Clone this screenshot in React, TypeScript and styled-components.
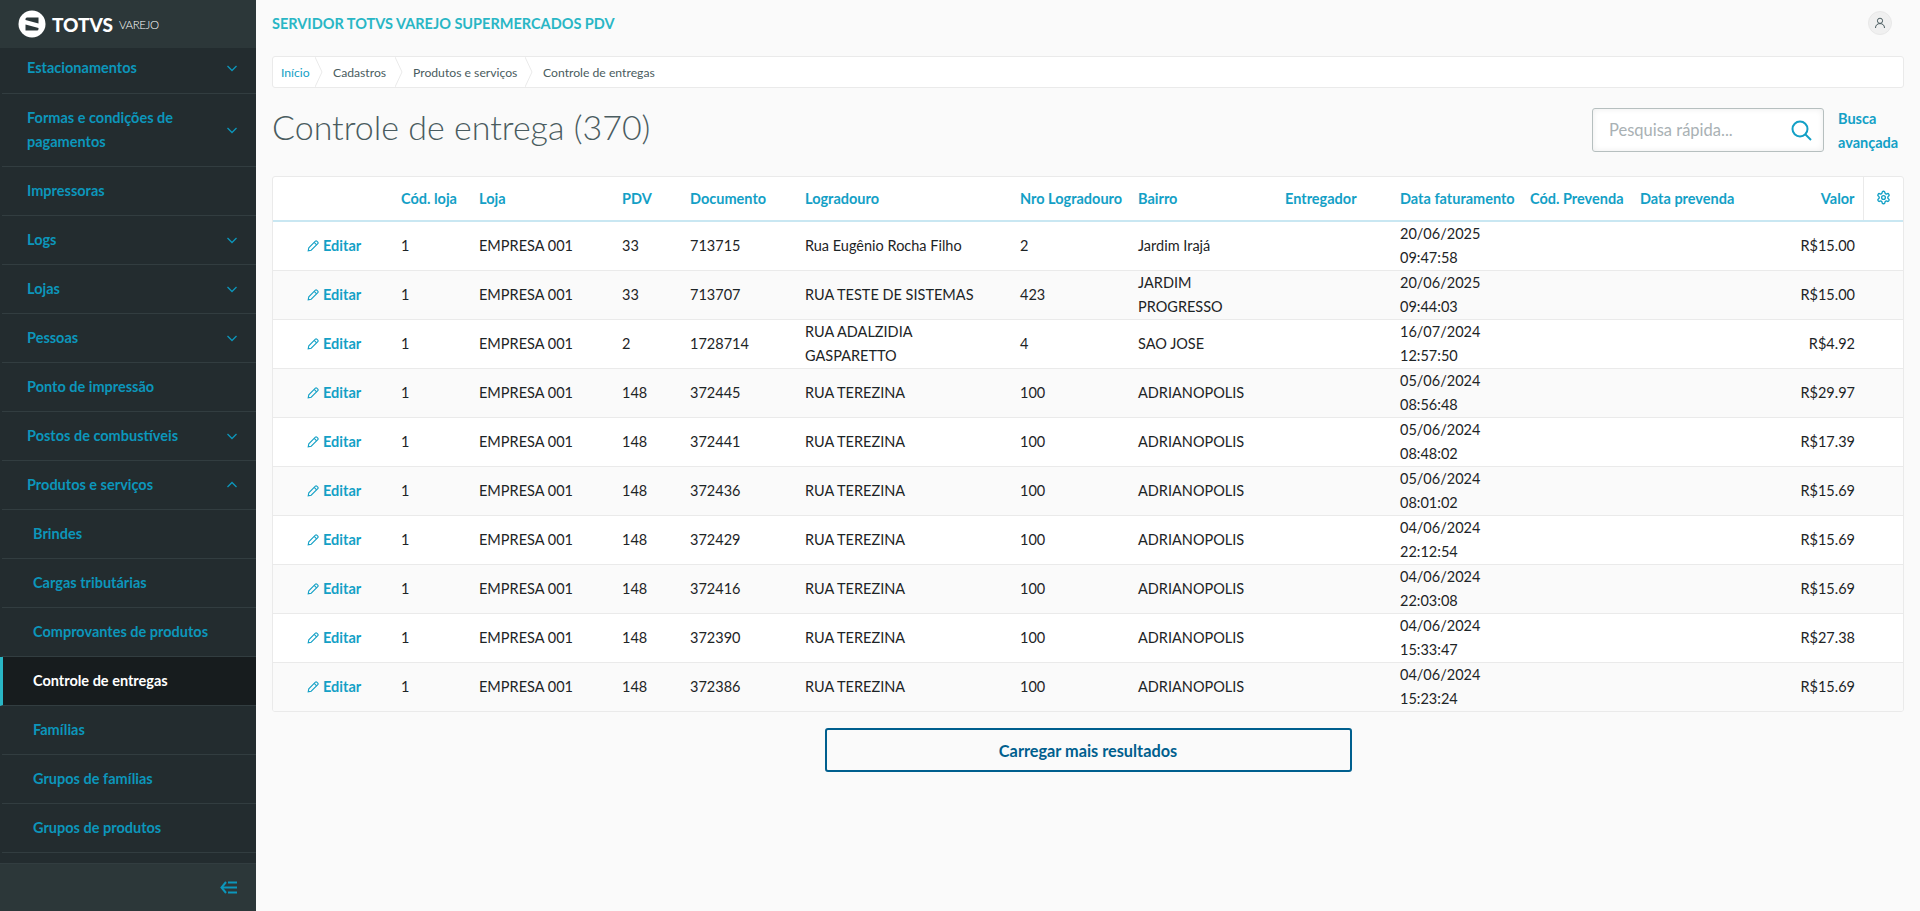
import React from 'react';
import styled, { createGlobalStyle } from 'styled-components';

const FONT = '"Lato", "Open Sans", sans-serif';
const SIDE_LINK = '#0c96bb';
const LINK = '#13a0c6';

const Global = createGlobalStyle`
  html, body { margin: 0; padding: 0; height: 100%; background: #fafafa; font-family: ${FONT}; }
  * { box-sizing: border-box; }
`;

const Shell = styled.div`
  display: flex;
  width: 1920px;
  height: 911px;
  overflow: hidden;
  background: #fafafa;
`;

const Sidebar = styled.aside`
  width: 256px;
  flex: none;
  display: flex;
  flex-direction: column;
  background: #232c2f;
`;

const Brand = styled.div`
  height: 48px;
  flex: none;
  background: #2c3739;
  display: flex;
  align-items: center;
  padding-left: 18px;
  color: #fff;
`;

const BrandName = styled.span`
  margin-left: 6px;
  font-size: 19px;
  font-weight: 900;
  letter-spacing: 0;
`;

const BrandSub = styled.span`
  margin-left: 6px;
  font-size: 11.5px;
  font-weight: 300;
  letter-spacing: -0.4px;
`;

const Nav = styled.nav`
  flex: 1;
  overflow: hidden;
`;

const NavItem = styled.div<{ $h?: number; $sub?: boolean; $active?: boolean; $clipped?: boolean }>`
  height: ${p => p.$h ?? 49}px;
  margin-left: ${p => (p.$active ? 0 : 2)}px;
  padding: 0 16px ${p => (p.$clipped ? 5 : 1)}px ${p => (p.$active ? 30 : p.$sub ? 31 : 25)}px;
  border-bottom: 1px solid #323d40;
  border-left: ${p => (p.$active ? '3px solid #29b6c5' : 'none')};
  background: ${p => (p.$active ? '#171c1e' : 'transparent')};
  color: ${p => (p.$active ? '#fff' : SIDE_LINK)};
  font-size: 14.5px;
  font-weight: 700;
  line-height: 24px;
  display: flex;
  align-items: center;
  justify-content: space-between;
`;

const NavLabel = styled.span`
  max-width: 192px;
`;

const Chevron = styled.svg`
  width: 12px;
  height: 12px;
  flex: none;
  margin-right: 2px;
`;

const SideFoot = styled.div`
  height: 48px;
  flex: none;
  background: #2c3739;
  border-top: 1px solid #323d40;
  display: flex;
  align-items: center;
  justify-content: flex-end;
  padding-right: 19px;
`;

const Main = styled.main`
  flex: 1;
  min-width: 0;
  padding: 0 16px;
  display: flex;
  flex-direction: column;
`;

const TopBar = styled.div`
  height: 56px;
  flex: none;
  display: flex;
  align-items: center;
  justify-content: space-between;
  padding-bottom: 10px;
`;

const ServerName = styled.div`
  color: #29b6c5;
  font-size: 14.5px;
  font-weight: 700;
`;

const Avatar = styled.div`
  width: 24px;
  height: 24px;
  margin-right: 12px;
  border-radius: 50%;
  background: #f0f0f0;
  border: 1px solid #e8e8e8;
  display: flex;
  align-items: center;
  justify-content: center;
`;

const Crumbs = styled.div`
  height: 32px;
  flex: none;
  display: flex;
  align-items: stretch;
  background: #fff;
  border: 1px solid #eaeaea;
  border-radius: 3px;
  font-size: 12.2px;
  color: #4a5c60;
`;

const Crumb = styled.div<{ $link?: boolean; $w: number; $first?: boolean }>`
  position: relative;
  width: ${p => p.$w}px;
  display: flex;
  align-items: center;
  padding-left: ${p => (p.$first ? 8 : 10)}px;
  color: ${p => (p.$link ? LINK : '#4a5c60')};
`;

const CrumbSep = styled.svg`
  position: absolute;
  right: 0;
  top: 0;
  width: 8px;
  height: 30px;
`;

const HeadRow = styled.div`
  height: 88px;
  flex: none;
  display: flex;
  align-items: flex-start;
  justify-content: space-between;
`;

const Title = styled.h1`
  margin: 17px 0 0;
  font-size: 34px;
  font-weight: 300;
  line-height: 44px;
  color: #4a5c60;
`;

const SearchZone = styled.div`
  display: flex;
  gap: 14px;
  padding-top: 20px;
`;

const SearchBox = styled.div`
  width: 232px;
  height: 44px;
  background: #fff;
  border: 1px solid #b6bfbf;
  border-radius: 3px;
  box-shadow: inset 0 0 6px rgba(0, 0, 0, 0.08);
  display: flex;
  align-items: center;
  justify-content: space-between;
  padding: 0 11px 0 16px;
  color: #a9b1b4;
  font-size: 16.5px;
`;

const AdvLink = styled.div`
  width: 66px;
  margin-top: -1px;
  color: ${LINK};
  font-size: 14.5px;
  font-weight: 700;
  line-height: 24px;
`;

const Card = styled.div`
  flex: none;
  background: #fff;
  border: 1px solid #eaeaea;
  border-radius: 3px;
  overflow: hidden;
`;

const Table = styled.table`
  width: 1630px;
  table-layout: fixed;
  border-collapse: collapse;
  font-size: 14.5px;
  color: #1d2426;
`;

const Th = styled.th<{ $right?: boolean; $gear?: boolean }>`
  height: 44px;
  padding: 0 ${p => (p.$gear ? 0 : 8)}px;
  border-bottom: 2px solid #c9e7f2;
  border-left: ${p => (p.$gear ? '1px solid #eaeaea' : 'none')};
  color: ${LINK};
  font-size: 14.5px;
  font-weight: 700;
  text-align: ${p => (p.$gear ? 'center' : p.$right ? 'right' : 'left')};
  white-space: nowrap;
`;

const Tr = styled.tr<{ $alt: boolean }>`
  background: ${p => (p.$alt ? '#fafafa' : '#fff')};
`;

const Td = styled.td<{ $right?: boolean; $narrow?: boolean }>`
  height: 49px;
  padding: 0 ${p => (p.$narrow ? 25 : 8)}px 0 8px;
  border-bottom: 1px solid #eaeaea;
  line-height: 24px;
  text-align: ${p => (p.$right ? 'right' : 'left')};
  tr:last-child & { border-bottom: none; height: 48px; }
`;

const EditLink = styled.span`
  display: flex;
  align-items: center;
  gap: 4px;
  padding-left: 26px;
  color: ${LINK};
  font-size: 14.5px;
  font-weight: 700;
`;

const Bottom = styled.div`
  flex: none;
  display: flex;
  justify-content: center;
  padding-top: 16px;
`;

const MoreButton = styled.button`
  width: 527px;
  height: 44px;
  background: transparent;
  border: 2px solid #005f8e;
  border-radius: 3px;
  color: #005f8e;
  font-family: ${FONT};
  font-size: 16.3px;
  font-weight: 700;
`;

const nav: { label: string; h?: number; chev?: 'down' | 'up'; sub?: boolean; active?: boolean; clipped?: boolean }[] = [
  { label: 'Estacionamentos', h: 46, chev: 'down', clipped: true },
  { label: 'Formas e condições de pagamentos', h: 73, chev: 'down' },
  { label: 'Impressoras' },
  { label: 'Logs', chev: 'down' },
  { label: 'Lojas', chev: 'down' },
  { label: 'Pessoas', chev: 'down' },
  { label: 'Ponto de impressão' },
  { label: 'Postos de combustíveis', chev: 'down' },
  { label: 'Produtos e serviços', chev: 'up' },
  { label: 'Brindes', sub: true },
  { label: 'Cargas tributárias', sub: true },
  { label: 'Comprovantes de produtos', sub: true },
  { label: 'Controle de entregas', sub: true, active: true },
  { label: 'Famílias', sub: true },
  { label: 'Grupos de famílias', sub: true },
  { label: 'Grupos de produtos', sub: true },
];

const colWidths = [120, 78, 143, 68, 115, 215, 118, 147, 115, 130, 110, 158, 73, 40];
const heads = ['', 'Cód. loja', 'Loja', 'PDV', 'Documento', 'Logradouro', 'Nro Logradouro', 'Bairro', 'Entregador', 'Data faturamento', 'Cód. Prevenda', 'Data prevenda'];

const rows = [
  ['33', '713715', 'Rua Eugênio Rocha Filho', '2', 'Jardim Irajá', '20/06/2025', '09:47:58', 'R$15.00'],
  ['33', '713707', 'RUA TESTE DE SISTEMAS', '423', 'JARDIM PROGRESSO', '20/06/2025', '09:44:03', 'R$15.00'],
  ['2', '1728714', 'RUA ADALZIDIA GASPARETTO', '4', 'SAO JOSE', '16/07/2024', '12:57:50', 'R$4.92'],
  ['148', '372445', 'RUA TEREZINA', '100', 'ADRIANOPOLIS', '05/06/2024', '08:56:48', 'R$29.97'],
  ['148', '372441', 'RUA TEREZINA', '100', 'ADRIANOPOLIS', '05/06/2024', '08:48:02', 'R$17.39'],
  ['148', '372436', 'RUA TEREZINA', '100', 'ADRIANOPOLIS', '05/06/2024', '08:01:02', 'R$15.69'],
  ['148', '372429', 'RUA TEREZINA', '100', 'ADRIANOPOLIS', '04/06/2024', '22:12:54', 'R$15.69'],
  ['148', '372416', 'RUA TEREZINA', '100', 'ADRIANOPOLIS', '04/06/2024', '22:03:08', 'R$15.69'],
  ['148', '372390', 'RUA TEREZINA', '100', 'ADRIANOPOLIS', '04/06/2024', '15:33:47', 'R$27.38'],
  ['148', '372386', 'RUA TEREZINA', '100', 'ADRIANOPOLIS', '04/06/2024', '15:23:24', 'R$15.69'],
];

const Logo = () => (
  <svg width="28" height="28" viewBox="0 0 28 28">
    <circle cx="14" cy="14" r="13.5" fill="#fff" />
    <path d="M9 7.5 H20.5 V13.5 L7.5 10 V9 Q7.5 7.5 9 7.5 Z" fill="#2c3739" />
    <path d="M7.5 14.5 L20.5 18 V19 Q20.5 20.5 19 20.5 H7.5 Z" fill="#2c3739" />
  </svg>
);

const Pencil = () => (
  <svg width="12" height="12" viewBox="0 0 12 12" fill="none" stroke={LINK} strokeWidth="1.1">
    <path d="M1.2 10.8 L1.8 7.8 L8.4 1.2 a1 1 0 0 1 1.4 0 L10.8 2.2 a1 1 0 0 1 0 1.4 L4.2 10.2 Z" />
    <path d="M7.2 2.4 L9.6 4.8" />
  </svg>
);

export default function App() {
  return (
    <>
      <Global />
      <Shell>
        <Sidebar>
          <Brand>
            <Logo />
            <BrandName>TOTVS</BrandName>
            <BrandSub>VAREJO</BrandSub>
          </Brand>
          <Nav>
            {nav.map(n => (
              <NavItem key={n.label} $h={n.h} $sub={n.sub} $active={n.active} $clipped={n.clipped}>
                <NavLabel>{n.label}</NavLabel>
                {n.chev && (
                  <Chevron viewBox="0 0 12 12" fill="none" stroke={SIDE_LINK} strokeWidth="1.3">
                    <path d={n.chev === 'down' ? 'M1.5 4 L6 8.5 L10.5 4' : 'M1.5 8 L6 3.5 L10.5 8'} />
                  </Chevron>
                )}
              </NavItem>
            ))}
          </Nav>
          <SideFoot>
            <svg width="17" height="13" viewBox="0 0 17 13" fill="none" stroke={SIDE_LINK} strokeWidth="2">
              <path d="M6 1 L1.5 6.5 L6 12" />
              <path d="M2 6.5 H17 M8 1.5 H17 M8 11.5 H17" />
            </svg>
          </SideFoot>
        </Sidebar>
        <Main>
          <TopBar>
            <ServerName>SERVIDOR TOTVS VAREJO SUPERMERCADOS PDV</ServerName>
            <Avatar>
              <svg width="12" height="12" viewBox="0 0 12 12" fill="none" stroke="#4a5c60" strokeWidth="1">
                <circle cx="6" cy="3.8" r="2.6" />
                <path d="M1.5 11 C1.5 8 3.5 6.6 6 6.6 C8.5 6.6 10.5 8 10.5 11" />
              </svg>
            </Avatar>
          </TopBar>
          <Crumbs>
            {[
              { t: 'Início', w: 50, link: true, first: true },
              { t: 'Cadastros', w: 80 },
              { t: 'Produtos e serviços', w: 130 },
            ].map(c => (
              <Crumb key={c.t} $w={c.w} $link={c.link} $first={c.first}>
                {c.t}
                <CrumbSep viewBox="0 0 8 30" fill="none" stroke="#eaeaea">
                  <path d="M0 0 L7 15 L0 30" />
                </CrumbSep>
              </Crumb>
            ))}
            <Crumb $w={200}>Controle de entregas</Crumb>
          </Crumbs>
          <HeadRow>
            <Title>Controle de entrega (370)</Title>
            <SearchZone>
              <SearchBox>
                Pesquisa rápida...
                <svg width="21" height="21" viewBox="0 0 21 21" fill="none" stroke={LINK} strokeWidth="2">
                  <circle cx="9" cy="9" r="7.5" />
                  <path d="M14.5 14.5 L20 20" />
                </svg>
              </SearchBox>
              <AdvLink>Busca avançada</AdvLink>
            </SearchZone>
          </HeadRow>
          <Card>
            <Table>
              <colgroup>
                {colWidths.map((w, i) => (
                  <col key={i} width={w} />
                ))}
              </colgroup>
              <thead>
                <tr>
                  {heads.map((h, i) => (
                    <Th key={i}>{h}</Th>
                  ))}
                  <Th $right>Valor</Th>
                  <Th $gear>
                    <svg width="15" height="15" viewBox="0 0 24 24" fill="none" stroke={LINK} strokeWidth="2.2">
                      <path d="M12.22 2h-.44a2 2 0 0 0-2 2v.18a2 2 0 0 1-1 1.73l-.43.25a2 2 0 0 1-2 0l-.15-.08a2 2 0 0 0-2.73.73l-.22.38a2 2 0 0 0 .73 2.73l.15.1a2 2 0 0 1 1 1.72v.51a2 2 0 0 1-1 1.74l-.15.09a2 2 0 0 0-.73 2.73l.22.38a2 2 0 0 0 2.73.73l.15-.08a2 2 0 0 1 2 0l.43.25a2 2 0 0 1 1 1.73V20a2 2 0 0 0 2 2h.44a2 2 0 0 0 2-2v-.18a2 2 0 0 1 1-1.73l.43-.25a2 2 0 0 1 2 0l.15.08a2 2 0 0 0 2.73-.73l.22-.39a2 2 0 0 0-.73-2.73l-.15-.08a2 2 0 0 1-1-1.74v-.5a2 2 0 0 1 1-1.74l.15-.09a2 2 0 0 0 .73-2.73l-.22-.38a2 2 0 0 0-2.73-.73l-.15.08a2 2 0 0 1-2 0l-.43-.25a2 2 0 0 1-1-1.73V4a2 2 0 0 0-2-2z" />
                      <circle cx="12" cy="12" r="3" />
                    </svg>
                  </Th>
                </tr>
              </thead>
              <tbody>
                {rows.map((r, i) => (
                  <Tr key={i} $alt={i % 2 === 1}>
                    <Td>
                      <EditLink>
                        <Pencil /> Editar
                      </EditLink>
                    </Td>
                    <Td>1</Td>
                    <Td>EMPRESA 001</Td>
                    <Td>{r[0]}</Td>
                    <Td>{r[1]}</Td>
                    <Td $narrow>{r[2]}</Td>
                    <Td>{r[3]}</Td>
                    <Td $narrow>{r[4]}</Td>
                    <Td />
                    <Td>
                      {r[5]}
                      <br />
                      {r[6]}
                    </Td>
                    <Td />
                    <Td />
                    <Td $right>{r[7]}</Td>
                    <Td />
                  </Tr>
                ))}
              </tbody>
            </Table>
          </Card>
          <Bottom>
            <MoreButton>Carregar mais resultados</MoreButton>
          </Bottom>
        </Main>
      </Shell>
    </>
  );
}
